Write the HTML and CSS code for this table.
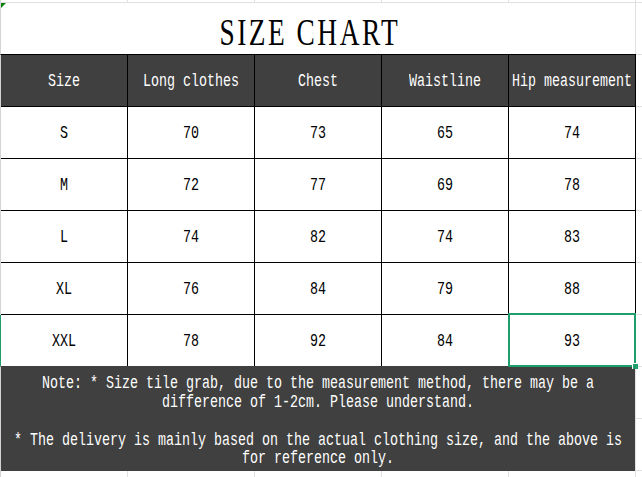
FILE: index.html
```html
<!DOCTYPE html>
<html lang="en">
<head>
<meta charset="utf-8">
<title>Size Chart</title>
<link rel="stylesheet" href="styles.css">
</head>
<body>
<div class="sheet">
  <div class="title"><span class="title-text">SIZE CHART</span></div>
  <div class="grid">
    <div class="cell head"><span class="txt">Size</span></div>
    <div class="cell head"><span class="txt">Long clothes</span></div>
    <div class="cell head"><span class="txt">Chest</span></div>
    <div class="cell head"><span class="txt">Waistline</span></div>
    <div class="cell head"><span class="txt">Hip measurement</span></div>

    <div class="cell"><span class="txt">S</span></div>
    <div class="cell"><span class="txt">70</span></div>
    <div class="cell"><span class="txt">73</span></div>
    <div class="cell"><span class="txt">65</span></div>
    <div class="cell"><span class="txt">74</span></div>

    <div class="cell"><span class="txt">M</span></div>
    <div class="cell"><span class="txt">72</span></div>
    <div class="cell"><span class="txt">77</span></div>
    <div class="cell"><span class="txt">69</span></div>
    <div class="cell"><span class="txt">78</span></div>

    <div class="cell"><span class="txt">L</span></div>
    <div class="cell"><span class="txt">74</span></div>
    <div class="cell"><span class="txt">82</span></div>
    <div class="cell"><span class="txt">74</span></div>
    <div class="cell"><span class="txt">83</span></div>

    <div class="cell"><span class="txt">XL</span></div>
    <div class="cell"><span class="txt">76</span></div>
    <div class="cell"><span class="txt">84</span></div>
    <div class="cell"><span class="txt">79</span></div>
    <div class="cell"><span class="txt">88</span></div>

    <div class="cell row-sel"><span class="txt">XXL</span></div>
    <div class="cell"><span class="txt">78</span></div>
    <div class="cell"><span class="txt">92</span></div>
    <div class="cell"><span class="txt">84</span></div>
    <div class="cell selected"><span class="txt">93</span><span class="sel-box"><span class="sel-handle"></span></span></div>
  </div>
  <div class="note">
    <div class="note-text">
      <p>Note: * Size tile grab, due to the measurement method, there may be a difference of 1-2cm. Please understand.</p>
      <p>* The delivery is mainly based on the actual clothing size, and the above is for reference only.</p>
    </div>
  </div>
</div>
</body>
</html>
```
FILE: styles.css
```css
html, body {
  margin: 0;
  padding: 0;
  background: #fff;
}

.sheet {
  width: 642px;
  height: 477px;
  overflow: hidden;
  position: relative;
  box-sizing: border-box;
  padding-top: 3px;
  background-color: #fff;
  background-image:
    linear-gradient(#d4d4d4, #d4d4d4),
    repeating-linear-gradient(to right, #e1e1e1 0 1px, transparent 1px 127px),
    repeating-linear-gradient(to bottom, #e1e1e1 0 1px, transparent 1px 52px);
  background-size: 1px 100%, 100% 100%, 100% 100%;
  background-repeat: no-repeat, repeat, repeat;
  background-position: 0 0, 0 0, 0 2px;
}

.title {
  position: relative;
  margin-left: 1px;
  width: 634px;
  height: 51px;
  box-sizing: border-box;
  padding-top: 6px;
  background: #fff;
  display: flex;
  justify-content: center;
  align-items: center;
}

.title::before {
  content: "";
  position: absolute;
  left: 0;
  top: 0;
  border-top: 5px solid #0b7d0b;
  border-right: 5px solid transparent;
}

.title-text {
  display: inline-block;
  font-family: "Liberation Serif", serif;
  font-size: 38px;
  line-height: 1;
  color: #000;
  letter-spacing: 3.5px;
  padding-right: 23px;
  transform: scaleX(0.72);
  white-space: nowrap;
}

.grid {
  display: grid;
  grid-template-columns: repeat(5, 126px);
  grid-auto-rows: 51px;
  gap: 1px;
  width: max-content;
  background: #000;
  border: 1px solid #000;
  border-left-color: #d4d4d4;
  border-bottom-color: #404040;
}

.cell {
  position: relative;
  display: flex;
  align-items: center;
  justify-content: center;
  box-sizing: border-box;
  padding-top: 2px;
  background: #fff;
  color: #000;
  font-family: "Liberation Mono", monospace;
  font-size: 13.33px;
}

.head {
  padding-top: 3px;
  background: #404040;
  color: #fff;
}

.txt {
  display: inline-block;
  line-height: 1;
  white-space: nowrap;
  transform: scaleY(1.4);
}

.row-sel::before {
  content: "";
  position: absolute;
  left: -1px;
  top: 0;
  bottom: 0;
  width: 1px;
  background: #1f9d6a;
}

.sel-box {
  position: absolute;
  top: -2px;
  left: -1px;
  right: -1px;
  bottom: -1px;
  border: 2px solid #1f9d6a;
  pointer-events: none;
}

.sel-handle {
  position: absolute;
  right: -4px;
  bottom: -4px;
  width: 5px;
  height: 5px;
  background: #1f9d6a;
  border-left: 1px solid #fff;
  border-top: 1px solid #fff;
}

.note {
  margin-left: 1px;
  width: 634px;
  height: 104px;
  box-sizing: border-box;
  padding: 7px 8px 0;
  background: #404040;
  color: #fff;
  font-family: "Liberation Mono", monospace;
  font-size: 13.33px;
  text-align: center;
}

.note-text {
  line-height: 13.3px;
  transform: scaleY(1.42);
  transform-origin: top center;
}

.note-text p {
  margin: 0;
}

.note-text p + p {
  margin-top: 13.3px;
}
```
